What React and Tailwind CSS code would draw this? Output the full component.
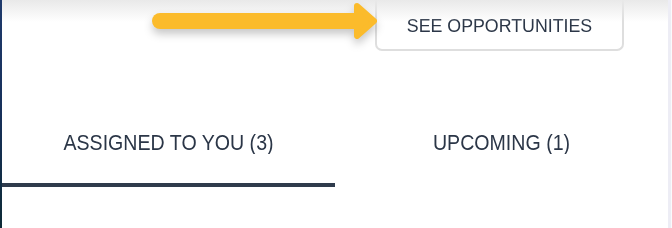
export default function App() {
  return (
    <div className="flex h-[228px] w-full overflow-hidden bg-white font-['Liberation_Sans',Arial,sans-serif] text-[#2b3647]">
      <div className="w-[2px] shrink-0 bg-gradient-to-b from-[#1f3a6c] via-[#17305a] to-[#0e2a36]" />
      <main className="relative flex flex-1 flex-col">
        <div className="pointer-events-none absolute inset-x-0 top-0 z-10 h-[22px] bg-gradient-to-b from-[#e9e9e9] to-white/0" />
        <div className="flex h-[51px] justify-end pr-[44px]">
          <button
            type="button"
            className="flex h-[51px] w-[249px] items-center justify-center rounded-b-[7px] border-x-2 border-b-2 border-[#dedede] bg-white pt-[4px] text-[17.8px]"
          >
            <span className="inline-block scale-y-[1.08]">SEE OPPORTUNITIES</span>
          </button>
        </div>
        <svg
          className="pointer-events-none absolute left-[144px] top-0 z-20"
          width="240"
          height="48"
          viewBox="144 0 240 48"
          style={{ filter: "drop-shadow(0 5px 4px rgba(0,0,0,0.22))" }}
        >
          <line x1="158" y1="21" x2="358" y2="21" stroke="#fbbb2b" strokeWidth="16" strokeLinecap="round" />
          <polygon points="355,6 372,21 355,36" fill="#fbbb2b" stroke="#fbbb2b" strokeWidth="6" strokeLinejoin="round" />
        </svg>
        <div className="mt-[47px] grid grid-cols-2">
          <div className="flex h-[89px] items-center justify-center border-b-4 border-[#2f3b4c] pt-[4px] text-[19.6px]">
            <span className="inline-block scale-y-[1.08]">ASSIGNED TO YOU (3)</span>
          </div>
          <div className="flex h-[89px] items-center justify-center border-b-4 border-transparent pt-[4px] text-[19.6px]">
            <span className="inline-block scale-y-[1.08]">UPCOMING (1)</span>
          </div>
        </div>
      </main>
      <div className="w-[3px] shrink-0 bg-[#ededf5]" />
      <div className="w-[1px] shrink-0 bg-[#fafafc]" />
    </div>
  );
}
